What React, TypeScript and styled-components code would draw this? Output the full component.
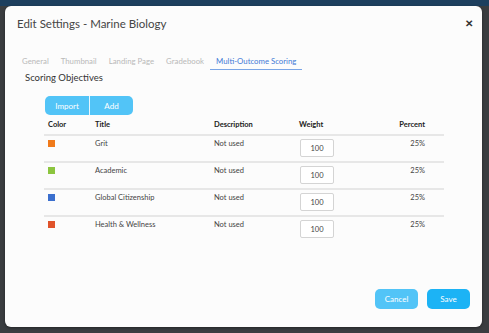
import styled, { createGlobalStyle } from "styled-components";

const GlobalStyle = createGlobalStyle`
  html, body {
    margin: 0;
    padding: 0;
    background: #3a3d40;
    font-family: "Lato", "Noto Sans", sans-serif;
  }
  * { box-sizing: border-box; }
`;

const Backdrop = styled.div`
  width: 489px;
  height: 333px;
  background: linear-gradient(#1d3f5e 0 6px, #3a3d40 6px);
  padding: 6px 7px 6px 5px;
`;

const Modal = styled.div`
  width: 477px;
  height: 321px;
  background: #fcfcfc;
  border-radius: 6px;
  box-shadow: 0 1px 3px rgba(0, 0, 0, 0.4);
  display: flex;
  flex-direction: column;
  padding: 10px 12px 18px 12px;
`;

const Header = styled.div`
  display: flex;
  justify-content: space-between;
  align-items: flex-start;
`;

const Title = styled.h2`
  margin: 0;
  font-size: 11.5px;
  font-weight: 400;
  color: #454545;
  line-height: 16px;
`;

const Close = styled.span`
  font-size: 10px;
  font-weight: 700;
  color: #333;
  line-height: 12px;
  margin-top: 1px;
  margin-right: -3px;
`;

const Tabs = styled.div`
  display: flex;
  margin-top: 25px;
  margin-left: -1px;
`;

const Tab = styled.div<{ $active?: boolean }>`
  font-size: 7.8px;
  color: ${({ $active }) => ($active ? "#3f79d6" : "#b9b9b9")};
  padding: 0 6px 3px 6px;
  border-bottom: 1px solid ${({ $active }) => ($active ? "#7aa5e6" : "transparent")};
  line-height: 9px;
`;

const SectionTitle = styled.div`
  font-size: 9.5px;
  color: #333;
  margin: 2px 0 0 8px;
  line-height: 12px;
`;

const ButtonGroup = styled.div`
  display: flex;
  margin: 12px 0 0 28px;
`;

const GroupButton = styled.button<{ $first?: boolean }>`
  width: 44px;
  height: 19px;
  border: none;
  background: #52c4f7;
  color: #fff;
  font-family: inherit;
  font-size: 8px;
  padding: 0;
  border-radius: ${({ $first }) => ($first ? "5px 0 0 5px" : "0 5px 5px 0")};
  border-left: ${({ $first }) => ($first ? "none" : "1px solid #e9f7fe")};
`;

const Table = styled.div`
  margin: 1px 0 0 27px;
  width: 400px;
`;

const Row = styled.div<{ $head?: boolean; $last?: boolean }>`
  display: grid;
  grid-template-columns: 47px 119px 85px 1fr 80px;
  height: ${({ $head }) => ($head ? "20px" : "27px")};
  border-bottom: ${({ $last }) => ($last ? "none" : "2px solid #e7e7e7")};
  align-items: start;
`;

const HeadCell = styled.div<{ $right?: boolean }>`
  font-size: 7.5px;
  font-weight: 700;
  color: #222;
  padding: 4px ${({ $right }) => ($right ? "19px" : "0")} 0 4px;
  text-align: ${({ $right }) => ($right ? "right" : "left")};
  line-height: 10px;
`;

const Cell = styled.div<{ $right?: boolean }>`
  font-size: 7.5px;
  color: #444;
  padding: 3px ${({ $right }) => ($right ? "19px" : "0")} 0 4px;
  text-align: ${({ $right }) => ($right ? "right" : "left")};
  line-height: 10px;
`;

const Swatch = styled.div<{ $color: string }>`
  width: 7px;
  height: 7px;
  margin: 4px 0 0 4px;
  background: ${({ $color }) => $color};
`;

const WeightInput = styled.div`
  margin: 3px 0 0 5px;
  width: 34px;
  height: 18px;
  border: 1px solid #d4d4d4;
  border-radius: 2px;
  background: #fff;
  font-size: 7.5px;
  color: #444;
  display: flex;
  align-items: center;
  justify-content: center;
`;

const Footer = styled.div`
  margin-top: auto;
  display: flex;
  justify-content: flex-end;
  gap: 9px;
`;

const FooterButton = styled.button<{ $primary?: boolean }>`
  width: 43px;
  height: 20px;
  border: none;
  border-radius: 5px;
  background: ${({ $primary }) => ($primary ? "#1cb3f5" : "#52c4f7")};
  color: #fff;
  font-family: inherit;
  font-size: 8px;
  padding: 0;
`;

const objectives = [
  { title: "Grit", color: "#f07a1b" },
  { title: "Academic", color: "#8cc53f" },
  { title: "Global Citizenship", color: "#3b6fce" },
  { title: "Health & Wellness", color: "#e0532b" },
];

const tabs = ["General", "Thumbnail", "Landing Page", "Gradebook", "Multi-Outcome Scoring"];

const App = () => {
  return (
    <>
      <GlobalStyle />
      <Backdrop>
        <Modal>
          <Header>
            <Title>Edit Settings - Marine Biology</Title>
            <Close>✕</Close>
          </Header>
          <Tabs>
            {tabs.map((t) => (
              <Tab key={t} $active={t === "Multi-Outcome Scoring"}>
                {t}
              </Tab>
            ))}
          </Tabs>
          <SectionTitle>Scoring Objectives</SectionTitle>
          <ButtonGroup>
            <GroupButton $first>Import</GroupButton>
            <GroupButton>Add</GroupButton>
          </ButtonGroup>
          <Table>
            <Row $head>
              <HeadCell>Color</HeadCell>
              <HeadCell>Title</HeadCell>
              <HeadCell>Description</HeadCell>
              <HeadCell>Weight</HeadCell>
              <HeadCell $right>Percent</HeadCell>
            </Row>
            {objectives.map((o, i) => (
              <Row key={o.title} $last={i === objectives.length - 1}>
                <Swatch $color={o.color} />
                <Cell>{o.title}</Cell>
                <Cell>Not used</Cell>
                <WeightInput>100</WeightInput>
                <Cell $right>25%</Cell>
              </Row>
            ))}
          </Table>
          <Footer>
            <FooterButton>Cancel</FooterButton>
            <FooterButton $primary>Save</FooterButton>
          </Footer>
        </Modal>
      </Backdrop>
    </>
  );
};

export default App;
